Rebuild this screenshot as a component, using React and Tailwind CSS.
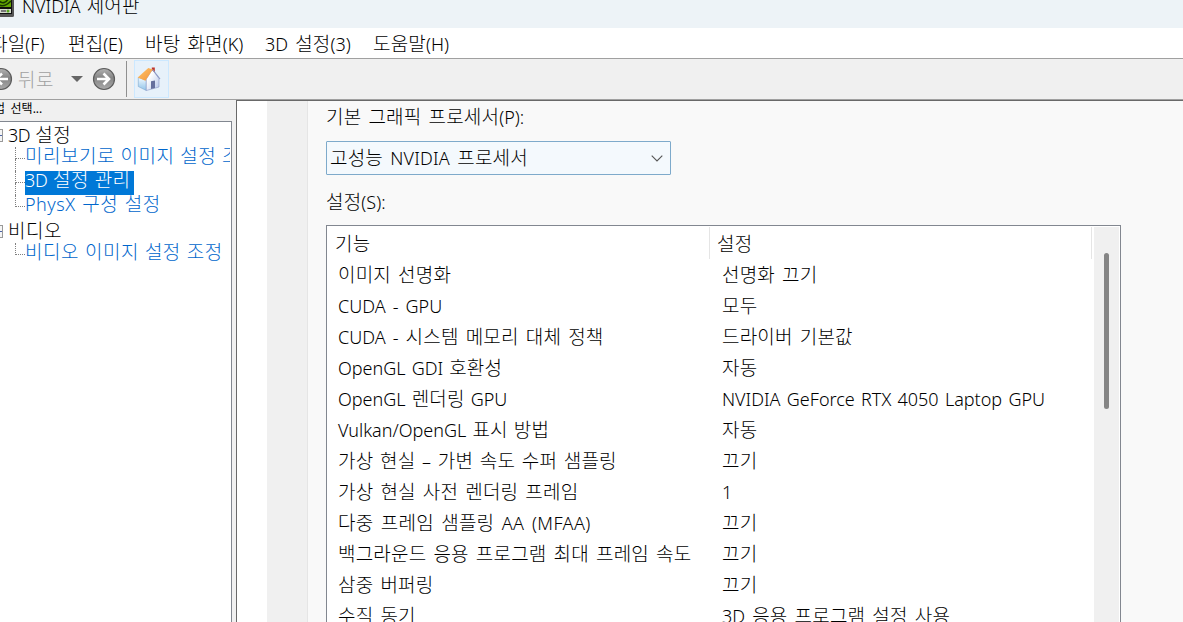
import React from 'react';

const menuItems = [
  { label: '파일(F)', className: '-ml-[10px] w-[78px]' },
  { label: '편집(E)', className: 'w-[77px] tracking-[-0.3px]' },
  { label: '바탕 화면(K)', className: 'w-[120px]' },
  { label: '3D 설정(3)', className: 'w-[108px]' },
  { label: '도움말(H)', className: 'w-[90px]' },
];

const settings = [
  { name: '이미지 선명화', value: '선명화 끄기' },
  { name: 'CUDA - GPU', value: '모두' },
  { name: 'CUDA - 시스템 메모리 대체 정책', value: '드라이버 기본값' },
  { name: 'OpenGL GDI 호환성', nameClass: '[word-spacing:1.4px]', value: '자동' },
  {
    name: 'OpenGL 렌더링 GPU',
    nameClass: '[word-spacing:1.4px]',
    value: 'NVIDIA GeForce RTX 4050 Laptop GPU',
    valueClass: '[word-spacing:1.6px]',
  },
  { name: 'Vulkan/OpenGL 표시 방법', nameClass: '[word-spacing:1.4px]', value: '자동' },
  { name: '가상 현실 – 가변 속도 수퍼 샘플링', nameClass: '[word-spacing:2px]', value: '끄기' },
  { name: '가상 현실 사전 렌더링 프레임', value: '1' },
  { name: '다중 프레임 샘플링 AA (MFAA)', nameClass: 'tracking-[0.4px]', value: '끄기' },
  { name: '백그라운드 응용 프로그램 최대 프레임 속도', value: '끄기' },
  { name: '삼중 버퍼링', value: '끄기' },
  { name: '수직 동기', value: '3D 응용 프로그램 설정 사용' },
];

// Hangul is set slightly larger than the Latin text around it
const Text = ({ children, hangul = 'text-[19px] tracking-[0.18px]' }) => (
  <>
    {children.split(/([가-힣]+)/).map((part, i) =>
      i % 2 ? <span key={i} className={hangul}>{part}</span> : part
    )}
  </>
);

const TREE_HANGUL = 'text-[19px] tracking-[0.5px]';

const NvidiaIcon = () => (
  <svg className="-ml-[5px] h-[17px] w-[19px] shrink-0" viewBox="0 0 19 17">
    <rect x="0" y="-3" width="19" height="20" rx="1.5" fill="#565656" />
    <rect x="0" y="-3" width="17" height="17" fill="#111" />
    <rect x="0" y="-3" width="16" height="10" fill="#65a800" />
    <path d="M4 5c4 2 8 0 12-4M4 1c3 3 7 2 9-2" fill="none" stroke="#173800" strokeWidth="1.6" />
    <rect x="5" y="9" width="11" height="4" fill="#d5dccd" />
    <path d="M6 11h5" stroke="#777" strokeWidth="2" />
    <circle cx="13" cy="11" r="1.5" fill="#55a51c" />
  </svg>
);

const NavButton = ({ back, className }) => (
  <svg className={`h-6 w-6 shrink-0 ${className}`} viewBox="0 0 24 24">
    <defs>
      <linearGradient id={back ? 'navBack' : 'navNext'} x1="0" y1="0" x2="0" y2="1">
        <stop offset="0" stopColor="#b2b2b2" />
        <stop offset=".45" stopColor="#858585" />
        <stop offset="1" stopColor="#aaa" />
      </linearGradient>
    </defs>
    <circle cx="12" cy="12" r="10.5" fill={back ? 'url(#navBack)' : 'url(#navNext)'} stroke="#5c5c5c" strokeWidth="1.2" />
    <path
      d={back ? 'M19 12H8M13 6.5L7.5 12l5.5 5.5' : 'M5 12h11M11.5 6.5L17 12l-5.5 5.5'}
      fill="none"
      stroke="#fff"
      strokeWidth="2.6"
    />
  </svg>
);

const HomeIcon = () => (
  <svg className="h-6 w-6" viewBox="0 0 24 24">
    <defs>
      <linearGradient id="roof" x1="0" y1="0" x2="1" y2="1">
        <stop offset="0" stopColor="#ffc56a" />
        <stop offset="1" stopColor="#f2933a" />
      </linearGradient>
      <linearGradient id="front" x1="0" y1="0" x2="1" y2="1">
        <stop offset=".3" stopColor="#fff" />
        <stop offset="1" stopColor="#b4c4ea" />
      </linearGradient>
      <linearGradient id="side" x1="0" y1="0" x2="0" y2="1">
        <stop offset="0" stopColor="#f2faff" />
        <stop offset="1" stopColor="#8fc3ea" />
      </linearGradient>
    </defs>
    <path d="M1.3 10.5v9l8 4V13z" fill="url(#side)" stroke="#7fa8cf" strokeWidth=".6" />
    <path d="M15.5 2.5L22 11.5V20L9.3 23.5V12z" fill="url(#front)" stroke="#8793c4" strokeWidth=".6" />
    <path d="M14.8.4h3v5.2l-3-2.6z" fill="#c0362c" />
    <path d="M15.5 2.5L23 12" stroke="#8e9ac6" strokeWidth="1.2" />
    <path d="M.7 10.4L11.3 1l4.4 1.4L8.4 13.8z" fill="url(#roof)" />
    <path d="M14 14.2l4-.7v7.6l-4 1z" fill="#666f9d" />
  </svg>
);

const Expander = () => (
  <span className="flex h-[13px] w-[3px] shrink-0 items-center border border-l-0 border-[#999] bg-[#f5f5f5]">
    <span className="h-px w-[2px] bg-[#4b63a7]" />
  </span>
);

const TreeRoot = ({ children }) => (
  <div className="flex h-6 items-center">
    <Expander />
    <span className="w-[5px]" />
    <span className="leading-[23px] tracking-[-0.6px]">
      <Text hangul={TREE_HANGUL}>{children}</Text>
    </span>
  </div>
);

const TreeItem = ({ children, last, selected, className = 'tracking-[-0.4px]' }) => (
  <div className="flex h-6">
    <div className="flex w-[25px] shrink-0 flex-col pl-[15px]">
      <div className="h-3 w-[10px] border-b border-l border-dotted border-[#808080]" />
      {!last && <div className="h-3 border-l border-dotted border-[#808080]" />}
    </div>
    <div className={`h-6 overflow-hidden leading-[19px] ${selected ? 'w-[109px] bg-[#0078d7] text-white' : 'text-[#0066cc]'} ${className}`}>
      <Text hangul={TREE_HANGUL}>{children}</Text>
    </div>
  </div>
);

const App = () => {
  return (
    <div className="flex h-[622px] w-[1183px] flex-col overflow-hidden bg-[#f0f0f0] font-['Noto_Sans','Noto_Sans_CJK_KR',sans-serif] text-[18px] font-light whitespace-nowrap text-black [word-spacing:2.4px]">
      {/* Title bar */}
      <header className="flex h-7 shrink-0 items-start bg-[#edf3f7]">
        <NvidiaIcon />
        <span className="-mt-[6px] ml-2 leading-6 [word-spacing:1.4px]"><Text>NVIDIA 제어판</Text></span>
      </header>

      {/* Menu bar */}
      <nav className="flex h-[31px] shrink-0 border-b border-[#a0a0a0] bg-white leading-[32px]">
        {menuItems.map((item) => (
          <span key={item.label} className={`shrink-0 ${item.className}`}><Text>{item.label}</Text></span>
        ))}
      </nav>

      {/* Toolbar */}
      <div className="flex h-[41px] shrink-0 items-center border-b border-[#a0a0a0]">
        <NavButton back className="-ml-[11px]" />
        <span className="ml-[5px] w-[53px] shrink-0 pt-0.5 text-[#a0a0a0]"><Text hangul={TREE_HANGUL}>뒤로</Text></span>
        <svg className="h-[7px] w-3 shrink-0" viewBox="0 0 12 7">
          <path d="M0 0h12L6 6z" fill="#666" />
        </svg>
        <NavButton className="ml-[9px]" />
        <span className="ml-[10px] h-9 w-px bg-[#909090]" />
        <span className="ml-[7px] flex h-[38px] w-[35px] items-center border border-[#cce8ff] bg-[#e7f1fa] pl-[2px]">
          <HomeIcon />
        </span>
      </div>

      <div className="flex min-h-0 flex-1">
        {/* Task list */}
        <aside className="flex w-[236px] shrink-0 flex-col overflow-hidden">
          <div className="-ml-[6px] h-[21px] text-[12px] leading-[18px] font-normal">업 선택...</div>
          <div className="w-[232px] flex-1 overflow-hidden border-t border-r border-[#828790] bg-white pt-px pr-px [word-spacing:1.4px]">
            <div className="overflow-hidden">
              <TreeRoot>3D 설정</TreeRoot>
              <TreeItem>미리보기로 이미지 설정 조정</TreeItem>
              <TreeItem selected>3D 설정 관리</TreeItem>
              <TreeItem last className="tracking-[0.5px]">PhysX 구성 설정</TreeItem>
              <TreeRoot>비디오</TreeRoot>
              <TreeItem last className="tracking-[-0.1px]">비디오 이미지 설정 조정</TreeItem>
            </div>
          </div>
        </aside>

        {/* Page */}
        <main className="flex flex-1 border-t border-l border-[#696969] bg-white pl-[30px]">
          <div className="w-10 shrink-0 bg-[#f0f0f0]" />
          <div className="flex flex-1 flex-col border-l border-[#e5e5e5] bg-[#f9f9f9] pl-[18px]">
            <div className="h-10 leading-[33px]"><Text>기본 그래픽 프로세서(P):</Text></div>
            <div className="flex h-[34px] w-[345px] shrink-0 items-center justify-between rounded-[1px] border border-[#7eaacb] bg-[#f4f9fd] pr-[7px] pl-[3px]">
              <span className="leading-[34px] tracking-[0.2px]"><Text>고성능 NVIDIA 프로세서</Text></span>
              <svg className="h-[7px] w-3" viewBox="0 0 12 7">
                <path d="M.7.7L6 6 11.3.7" fill="none" stroke="#555" strokeWidth="1.1" />
              </svg>
            </div>
            <div className="h-[50px] leading-[54px]"><Text>설정(S):</Text></div>

            <div className="flex min-h-0 w-[795px] flex-1 overflow-hidden border border-b-0 border-[#828790] bg-white">
              <div className="w-[767px] shrink-0">
                <div className="flex h-[33px] leading-[34px]">
                  <span className="mt-px h-8 w-[383px] border-r border-[#e5e5e5] pl-2"><Text>기능</Text></span>
                  <span className="mt-px h-8 w-[382px] border-r border-[#e5e5e5] pl-[7px]"><Text>설정</Text></span>
                </div>
                {settings.map((row) => (
                  <div key={row.name} className="flex h-[31px] leading-[32px]">
                    <span className={`w-[384px] pl-[11px] ${row.nameClass || ''}`}><Text>{row.name}</Text></span>
                    <span className={`pl-[11px] ${row.valueClass || ''}`}><Text>{row.value}</Text></span>
                  </div>
                ))}
              </div>
              <div className="mt-px flex w-[25px] justify-center bg-[#f0f0f0] pt-[26px]">
                <span className="h-[156px] w-[5px] rounded-full bg-[#858585]" />
              </div>
            </div>
          </div>
        </main>
      </div>
    </div>
  );
};

export default App;
